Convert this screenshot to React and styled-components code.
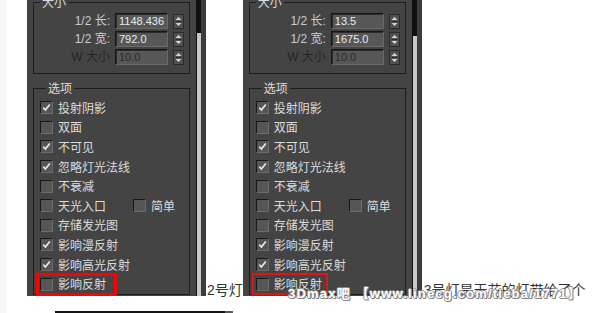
import React from "react";
import styled, { createGlobalStyle } from "styled-components";

const Global = createGlobalStyle`
  html, body { margin: 0; padding: 0; background: #fff; overflow: hidden; }
  body { width: 609px; height: 313px; }
`;

const Page = styled.div`
  position: relative;
  height: 313px;
  border-left: 7px solid #f7f8fa;
  box-sizing: border-box;
  font-family: "Liberation Sans", "Noto Sans CJK SC", sans-serif;
`;

const Line = styled.div`
  display: flex;
  align-items: flex-end;
  padding-left: 20px;
`;

const Panel = styled.div`
  position: relative;
  flex: none;
  display: flex;
  width: 179px;
  height: 296px;
  background: #444444;
  overflow: hidden;
`;

const Body = styled.div`
  width: 169px;
  padding-left: 6px;
  box-sizing: border-box;
  display: flex;
  flex-direction: column;
  margin-top: -5px;
`;

const Group = styled.fieldset`
  margin: ${(p) => p.$mt || 0}px 0 0 0;
  padding: ${(p) => p.$pad};
  border: 1px solid #1d1d1d;
  width: 157px;
  box-sizing: border-box;
  min-width: 0;
  display: flex;
  flex-direction: column;
  gap: ${(p) => p.$gap || 0}px;
`;

const Legend = styled.legend`
  margin-left: 6px;
  padding: 0 2px;
  font: 12px/14px "Noto Sans CJK SC", sans-serif;
  color: #dcdcdc;
`;

const ParamRow = styled.div`
  display: flex;
  align-items: center;
  justify-content: flex-end;
  gap: 5px;
  height: 16px;
  padding-right: 5px;
`;

const Label = styled.span`
  font: 12px/16px "Liberation Sans", "Noto Sans CJK SC", sans-serif;
  color: ${(p) => (p.$disabled ? "#262626" : "#c4cddc")};
  white-space: nowrap;
`;

const Field = styled.div`
  width: 53px;
  height: 16px;
  box-sizing: border-box;
  border: 1px solid;
  border-color: #151515 #6a6a6a #6a6a6a #151515;
  box-shadow: inset 1px 1px 0 #2c2c2c;
  background: #575757;
  padding-left: 3px;
  font: 11px/14px "Liberation Sans", sans-serif;
  color: ${(p) => (p.$disabled ? "#2a2a2a" : "#e6ecf8")};
`;

const Spinner = styled.div`
  width: 11px;
  height: 15px;
  box-sizing: border-box;
  border: 1px solid #2a2a2a;
  background: #505050;
  display: flex;
  align-items: center;
  justify-content: center;
`;

const Opt = styled.div`
  display: flex;
  align-items: center;
  height: 19.6px;
`;

const Cell = styled.div`
  display: flex;
  align-items: center;
  gap: 5px;
  width: ${(p) => (p.$w ? `${p.$w}px` : "auto")};
  flex: none;
`;

const Box = styled.span`
  width: 13px;
  height: 13px;
  box-sizing: border-box;
  border: 1px solid;
  border-color: #181818 #6c6c6c #6c6c6c #181818;
  background: #565656;
  display: flex;
  align-items: center;
  justify-content: center;
`;

const OptText = styled.span`
  font: 12px/14px "Noto Sans CJK SC", sans-serif;
  color: #dcdcdc;
  white-space: nowrap;
`;

const Track = styled.div`
  width: 5px;
  background: #0f0f0f;
  display: flex;
  flex-direction: column;
  padding-top: ${(p) => p.$top}px;
  padding-left: 1px;
  box-sizing: border-box;
  flex: none;
`;

const Thumb = styled.div`
  flex: 1;
  background: #c9c9c9;
`;

const Edge = styled.div`
  width: 5px;
  background: #3c3c3c;
  flex: none;
`;

const Mark = styled.div`
  position: absolute;
  left: 9px;
  top: 273px;
  width: ${(p) => p.$w}px;
  height: ${(p) => p.$h}px;
  border: ${(p) => p.$t}px solid ${(p) => p.$c};
  box-sizing: border-box;
  pointer-events: none;
`;

const Caption = styled.span`
  font: 14px/14px "Liberation Sans", "Noto Sans CJK SC", sans-serif;
  color: #333;
  white-space: nowrap;
  margin: 0 0 -1px ${(p) => p.$ml}px;
  flex: none;
`;

const NextLine = styled.div`
  display: flex;
  padding-left: 48px;
  margin-top: 15px;
`;

const NextImage = styled.div`
  width: 178px;
  height: 20px;
  background: linear-gradient(90deg, #131313 0 170px, #585858 170px);
`;

const Watermark = styled.div`
  position: absolute;
  left: 281px;
  top: 287px;
  font: bold 13px/14px "Liberation Sans", "Noto Sans CJK SC", sans-serif;
  letter-spacing: 1.2px;
  color: #fff;
  white-space: nowrap;
  text-shadow: 1px 0 #8c8c8c, -1px 0 #8c8c8c, 0 1px #8c8c8c, 0 -1px #8c8c8c,
    1px 1px #6a6a6a;
`;

const SpinIcon = () => (
  <svg width="7" height="11" viewBox="0 0 7 11">
    <polygon points="3.5,1 6.5,4 0.5,4" fill="#d6d6d6" />
    <rect x="0.5" y="5" width="6" height="1" fill="#2e2e2e" />
    <polygon points="0.5,7 6.5,7 3.5,10" fill="#d6d6d6" />
  </svg>
);

const Check = ({ on }) => (
  <Box>
    {on && (
      <svg width="9" height="9" viewBox="0 0 9 9">
        <polyline
          points="1.3,4.6 3.4,7 7.8,1.4"
          fill="none"
          stroke="#ececec"
          strokeWidth="1.6"
        />
      </svg>
    )}
  </Box>
);

const sizeRows = (a, b) => [
  { label: "1/2 长:", value: a },
  { label: "1/2 宽:", value: b },
  { label: "W 大小", value: "10.0", disabled: true },
];

const options = [
  { t: "投射阴影", on: true },
  { t: "双面", on: false },
  { t: "不可见", on: true },
  { t: "忽略灯光法线", on: true },
  { t: "不衰减", on: false },
  { t: "天光入口", on: false, extra: "简单" },
  { t: "存储发光图", on: false },
  { t: "影响漫反射", on: true },
  { t: "影响高光反射", on: true },
  { t: "影响反射", on: false },
];

const LightPanel = ({ len, wid, thumbTop, mark }) => (
  <Panel>
    <Body>
      <Group $pad="4px 0 8px 0" $gap={2}>
        <Legend>大小</Legend>
        {sizeRows(len, wid).map((r) => (
          <ParamRow key={r.label}>
            <Label $disabled={r.disabled}>{r.label}</Label>
            <Field $disabled={r.disabled}>{r.value}</Field>
            <Spinner>
              <SpinIcon />
            </Spinner>
          </ParamRow>
        ))}
      </Group>
      <Group $mt={7} $pad="3px 0 0 6px">
        <Legend>选项</Legend>
        {options.map((o) => (
          <Opt key={o.t}>
            <Cell $w={o.extra ? 93 : 0}>
              <Check on={o.on} />
              <OptText>{o.t}</OptText>
            </Cell>
            {o.extra && (
              <Cell>
                <Check on={false} />
                <OptText>{o.extra}</OptText>
              </Cell>
            )}
          </Opt>
        ))}
      </Group>
    </Body>
    <Track $top={thumbTop}>
      <Thumb />
    </Track>
    <Edge />
    <Mark $w={mark.w} $h={mark.h} $t={mark.t} $c={mark.c} />
  </Panel>
);

export default function App() {
  return (
    <Page>
      <Global />
      <Line>
        <LightPanel
          len="1148.436"
          wid="792.0"
          thumbTop={33}
          mark={{ w: 81, h: 23, t: 3, c: "#ff0000" }}
        />
        <Caption $ml={1}>2号灯</Caption>
        <LightPanel
          len="13.5"
          wid="1675.0"
          thumbTop={36}
          mark={{ w: 76, h: 22, t: 2, c: "#e41414" }}
        />
        <Caption $ml={2}>3号灯是天花的灯带给了个</Caption>
      </Line>
      <NextLine>
        <NextImage />
      </NextLine>
      <Watermark>3Dmax吧 【www.linecg.com/tieba/1771】</Watermark>
    </Page>
  );
}
